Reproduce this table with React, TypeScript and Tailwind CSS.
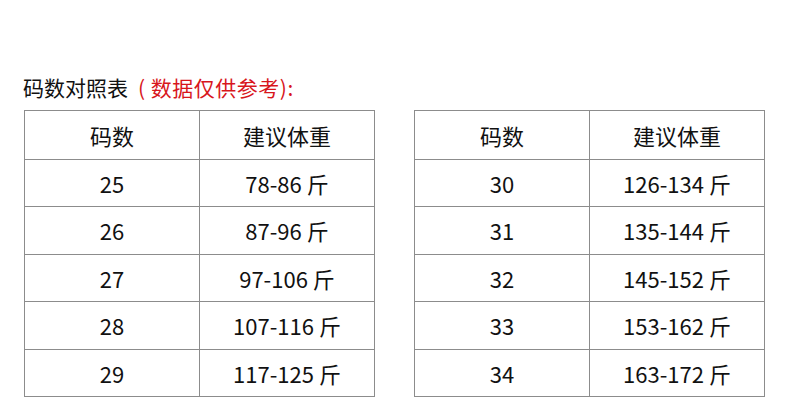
const left = [
  ['25', '78-86 斤'],
  ['26', '87-96 斤'],
  ['27', '97-106 斤'],
  ['28', '107-116 斤'],
  ['29', '117-125 斤'],
];

const right = [
  ['30', '126-134 斤'],
  ['31', '135-144 斤'],
  ['32', '145-152 斤'],
  ['33', '153-162 斤'],
  ['34', '163-172 斤'],
];

function SizeTable({ rows }: { rows: string[][] }) {
  return (
    <div className="w-[351px] h-[287px] border border-[#8c8c8c] grid grid-rows-6">
      <div className="grid grid-cols-[175px_1fr] items-stretch">
        <div className="flex items-center justify-center border-r border-[#8c8c8c]">码数</div>
        <div className="flex items-center justify-center">建议体重</div>
      </div>
      {rows.map(([size, weight]) => (
        <div key={size} className="grid grid-cols-[175px_1fr] border-t border-[#8c8c8c]">
          <div className="flex items-center justify-center border-r border-[#8c8c8c]">{size}</div>
          <div className="flex items-center justify-center">{weight}</div>
        </div>
      ))}
    </div>
  );
}

export default function App() {
  return (
    <div
      className="w-[790px] h-[403px] bg-white text-[#111] text-[22px] leading-none"
      style={{ fontFamily: '"Noto Sans CJK SC", "Noto Sans", sans-serif' }}
    >
      <div className="pl-[23px] pt-[75px] h-[110px] text-[21px] leading-[25px]">
        码数对照表
        <span className="ml-[10px] text-[#d8161c] tracking-[0.5px]">(&nbsp;数据仅供参考):</span>
      </div>
      <div className="flex gap-[39px] pl-[24px]">
        <SizeTable rows={left} />
        <SizeTable rows={right} />
      </div>
    </div>
  );
}
